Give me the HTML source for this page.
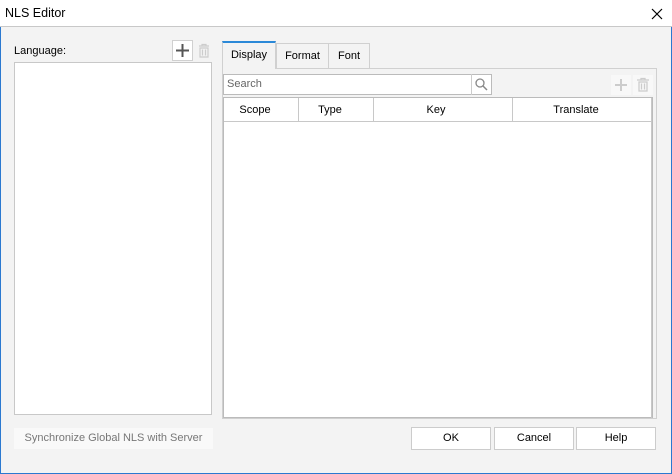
<html><head><style>
*{box-sizing:border-box;margin:0;padding:0}
body{width:672px;height:474px;overflow:hidden;font-family:"Liberation Sans",sans-serif;font-size:11px;color:#000;background:#f3f3f3;position:relative}
.a{position:absolute}
</style></head><body>
<div class="a" style="left:0;top:0;width:672px;height:474px;border:1px solid #2b79d0;border-top:none"></div>
<div class="a" style="left:0;top:0;width:672px;height:27px;background:#fff;border-bottom:1px solid #c8c8c8"></div>
<div class="a" style="left:5px;top:6px;font-size:12.5px">NLS Editor</div>
<svg class="a" style="left:651px;top:8px" width="12" height="12"><path d="M1 1L11 11M11 1L1 11" stroke="#000" stroke-width="1.2"/></svg>
<div class="a" style="left:14px;top:45px">Language:</div>
<div class="a" style="left:172px;top:40px;width:21px;height:21px;background:#fff;border:1px solid #d0d0d0"></div>
<svg class="a" style="left:175px;top:43px" width="15" height="15"><path d="M7.5 1V14M1 7.5H14" stroke="#555" stroke-width="2"/></svg>
<svg class="a" style="left:197px;top:43px" width="14" height="15"><path d="M2 3H12M5 3V1.5H9V3M3 5H11V14H3Z M5.5 6.5V12.5M8.5 6.5V12.5" stroke="#ccc" fill="none" stroke-width="1.2"/></svg>
<div class="a" style="left:14px;top:62px;width:198px;height:353px;background:#fff;border:1px solid #c8c8c8"></div>
<div class="a" style="left:222px;top:68px;width:435px;height:351px;border:1px solid #d0d0d0"></div>
<div class="a" style="left:276px;top:43px;width:53px;height:26px;border:1px solid #d0d0d0;background:#f3f3f3;text-align:center;line-height:24px">Format</div>
<div class="a" style="left:328px;top:43px;width:42px;height:26px;border:1px solid #d0d0d0;background:#f3f3f3;text-align:center;line-height:24px">Font</div>
<div class="a" style="left:222px;top:41px;width:54px;height:28px;border:1px solid #d0d0d0;border-top:2px solid #2b89d8;border-bottom:none;background:#f3f3f3;text-align:center;line-height:24px">Display</div>
<div class="a" style="left:223px;top:74px;width:269px;height:21px;background:#fff;border:1px solid #bbb"></div>
<div class="a" style="left:227px;top:78px;color:#666">Search</div>
<div class="a" style="left:471px;top:74px;width:1px;height:21px;background:#ccc"></div>
<svg class="a" style="left:474px;top:77px" width="15" height="15"><circle cx="6" cy="6" r="4" stroke="#888" fill="none" stroke-width="1.3"/><path d="M9 9L13 13" stroke="#888" stroke-width="1.5"/></svg>
<div class="a" style="left:611px;top:75px;width:20px;height:20px;background:#f8f8f8"></div>
<svg class="a" style="left:614px;top:78px" width="14" height="14"><path d="M7 1V13M1 7H13" stroke="#ccc" stroke-width="2"/></svg>
<div class="a" style="left:633px;top:75px;width:20px;height:20px;background:#f8f8f8"></div>
<svg class="a" style="left:636px;top:77px" width="14" height="15"><path d="M1 3H13M5 3V1.5H9V3M3 5H11V14H3Z M5.5 6.5V12.5M8.5 6.5V12.5" stroke="#ccc" fill="none" stroke-width="1.3"/></svg>
<div class="a" style="left:223px;top:97px;width:430px;height:321px;background:#fff;border:1px solid #bbb"></div>
<div class="a" style="left:224px;top:121px;width:428px;height:1px;background:#c8c8c8"></div>
<div class="a" style="left:298px;top:98px;width:1px;height:23px;background:#c8c8c8"></div>
<div class="a" style="left:373px;top:98px;width:1px;height:23px;background:#c8c8c8"></div>
<div class="a" style="left:512px;top:98px;width:1px;height:23px;background:#c8c8c8"></div>
<div class="a" style="left:651px;top:98px;width:1px;height:320px;background:#c8c8c8"></div>
<div class="a" style="left:224px;top:104px;width:62px;text-align:center">Scope</div>
<div class="a" style="left:299px;top:104px;width:62px;text-align:center">Type</div>
<div class="a" style="left:374px;top:104px;width:124px;text-align:center">Key</div>
<div class="a" style="left:513px;top:104px;width:126px;text-align:center">Translate</div>
<div class="a" style="left:14px;top:428px;width:199px;height:21px;background:#f9f9f9;color:#777;text-align:center;line-height:21px">Synchronize Global NLS with Server</div>
<div class="a" style="left:411px;top:427px;width:80px;height:23px;background:#fff;border:1px solid #ccc;text-align:center;line-height:21px">OK</div>
<div class="a" style="left:494px;top:427px;width:80px;height:23px;background:#fff;border:1px solid #ccc;text-align:center;line-height:21px">Cancel</div>
<div class="a" style="left:576px;top:427px;width:80px;height:23px;background:#fff;border:1px solid #ccc;text-align:center;line-height:21px">Help</div>
</body></html>
